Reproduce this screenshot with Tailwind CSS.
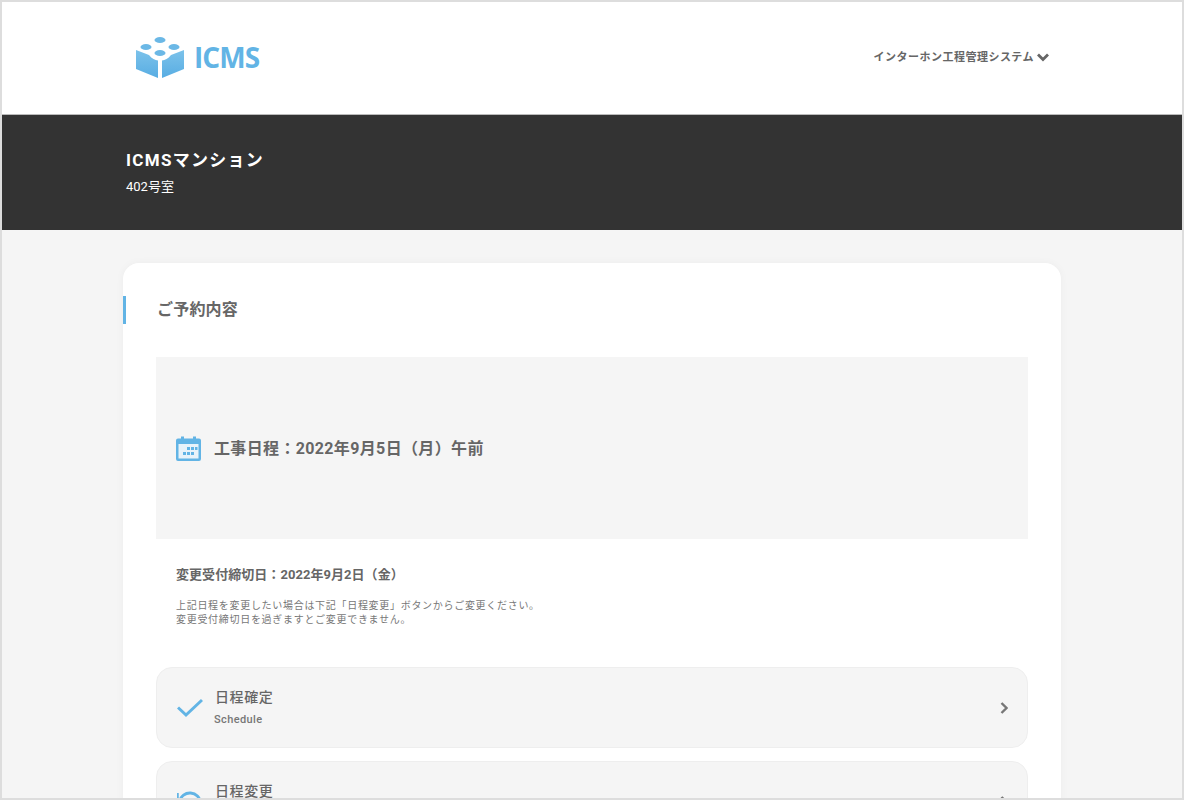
<!DOCTYPE html>
<html lang="ja">
<head>
  <meta charset="utf-8">
  <title>ICMS</title>
  <script src="https://cdn.jsdelivr.net/npm/@tailwindcss/browser@4"></script>
</head>
<body class="bg-[#f5f5f5] font-['Roboto','Noto_Sans_CJK_JP',sans-serif] text-[#666]">
  <div class="h-[800px] w-[1184px] overflow-hidden border-2 border-[#dddddd] bg-[#f5f5f5]">

    <!-- Header -->
    <header class="flex h-[113px] items-center justify-between border-b border-[#bbb] bg-white px-[133px]">
      <div class="flex items-center gap-[10px] pb-[2px] pl-[1px]">
        <svg width="48" height="44" viewBox="0 0 48 44">
          <defs>
            <linearGradient id="cube" x1="0" y1="0" x2="0" y2="1">
              <stop offset="0" stop-color="#7cc2ea"/>
              <stop offset="1" stop-color="#58ade3"/>
            </linearGradient>
          </defs>
          <ellipse cx="24" cy="5" rx="5.500" ry="3" fill="#6bb8e6"/>
          <ellipse cx="10" cy="12" rx="5.500" ry="3" fill="#6bb8e6"/>
          <ellipse cx="38" cy="12" rx="5.500" ry="3" fill="#6bb8e6"/>
          <ellipse cx="24" cy="18" rx="5.500" ry="3" fill="#6bb8e6"/>
          <path d="M0 15 L13 20 C16 24 19 25 22 25.500 L22 43 L0 34 Z" fill="url(#cube)"/>
          <path d="M48 15 L35 20 C32 24 29 25 26 25.500 L26 43 L48 34 Z" fill="url(#cube)"/>
        </svg>
        <span class="font-['Open_Sans',sans-serif] text-[28px] leading-none font-bold tracking-[-0.9px] text-[#62b4e5]">ICMS</span>
      </div>
      <div class="flex items-center gap-[3px] pt-[1px] text-[11px] font-bold tracking-[0.48px] text-[#666]">
        <span>インターホン工程管理システム</span>
        <svg class="mb-[2px]" width="12" height="9" viewBox="0 0 12 9" fill="none" stroke="#666" stroke-width="2.800"><path d="M1 1.500 L6 6.500 L11 1.500"/></svg>
      </div>
    </header>

    <!-- Property band -->
    <section class="flex h-[115px] flex-col bg-[#333333] pt-[33px] pl-[124px] text-white">
      <h1 class="text-[17px] leading-[24px] font-bold tracking-[1.3px]">ICMSマンション</h1>
      <p class="mt-[7px] text-[13px] leading-[16px]">402号室</p>
    </section>

    <!-- Card -->
    <main class="mx-[121px] mt-[33px] rounded-t-[16px] bg-white pt-[33px] pb-10 shadow-[0_0_8px_rgba(0,0,0,0.04)]">
      <h2 class="flex h-[28px] items-center border-l-[3px] border-[#62b4e5] pl-[31px] text-[16px] font-bold tracking-[0.2px] text-[#666]">ご予約内容</h2>

      <div class="mx-[33px] mt-[33px]">
        <div class="flex h-[182px] items-center gap-[13px] bg-[#f5f5f5] pl-[20px]">
          <svg width="25" height="25" viewBox="0 0 25 25">
            <path d="M2 2.500 H5 V0.500 H8 V2.500 H17 V0.500 H20 V2.500 H23 A2 2 0 0 1 25 4.500 V23 A2 2 0 0 1 23 25 H2 A2 2 0 0 1 0 23 V4.500 A2 2 0 0 1 2 2.500 Z" fill="#62b4e5"/>
            <rect x="2.500" y="8" width="20" height="14.500" fill="#e8f3fa"/>
            <g fill="#62b4e5">
              <rect x="11" y="11" width="3" height="3"/><rect x="15" y="11" width="3" height="3"/><rect x="19" y="11" width="2.500" height="3"/>
              <rect x="7" y="16" width="3" height="3"/><rect x="11" y="16" width="3" height="3"/><rect x="15" y="16" width="3" height="3"/>
            </g>
          </svg>
          <p class="pt-[2px] text-[16px] font-bold tracking-[0.35px] text-[#666]">工事日程：2022年9月5日（月）午前</p>
        </div>

        <div class="pt-[26px] pl-[20px]">
          <p class="text-[13px] leading-[20px] font-bold tracking-[0.05px] text-[#666]">変更受付締切日：2022年9月2日（金）</p>
          <p class="mt-[14px] text-[10px] leading-[14px] tracking-[0.7px] text-[#777]">上記日程を変更したい場合は下記「日程変更」ボタンからご変更ください。<br>変更受付締切日を過ぎますとご変更できません。</p>
        </div>

        <div class="mt-[40px] flex flex-col gap-[13px]">
          <a class="flex h-[81px] items-center rounded-[16px] border border-[#eeeeee] bg-[#f5f5f5] pr-[19px] pl-[20px]">
            <svg width="26" height="20" viewBox="0 0 26 20" fill="none" stroke="#62b4e5" stroke-width="3"><path d="M1 9.500 L9 17 L25 2"/></svg>
            <div class="ml-[12px] flex-1">
              <p class="text-[14px] leading-[20px] font-medium tracking-[0.6px] text-[#666]">日程確定</p>
              <p class="mt-[5px] -ml-[1px] text-[11px] leading-[16px] font-medium tracking-[0.4px] text-[#777]">Schedule</p>
            </div>
            <svg width="8" height="12" viewBox="0 0 8 12" fill="none" stroke="#777" stroke-width="2.400"><path d="M1.500 1 L6.500 6 L1.500 11"/></svg>
          </a>
          <a class="flex h-[81px] items-center rounded-[16px] border border-[#eeeeee] bg-[#f5f5f5] pr-[19px] pl-[20px]">
            <svg width="26" height="24" viewBox="0 0 26 24" fill="none" stroke="#62b4e5" stroke-width="3"><path d="M3 11 A10 9 0 1 1 13 21"/><path d="M0.500 3 V12 H9" stroke-width="2.500"/></svg>
            <div class="ml-[12px] flex-1">
              <p class="text-[14px] leading-[20px] font-medium tracking-[0.6px] text-[#666]">日程変更</p>
              <p class="mt-[5px] -ml-[1px] text-[11px] leading-[16px] font-medium tracking-[0.4px] text-[#777]">Change</p>
            </div>
            <svg width="8" height="12" viewBox="0 0 8 12" fill="none" stroke="#777" stroke-width="2.400"><path d="M1.500 1 L6.500 6 L1.500 11"/></svg>
          </a>
        </div>
      </div>
    </main>
  </div>
</body>
</html>
